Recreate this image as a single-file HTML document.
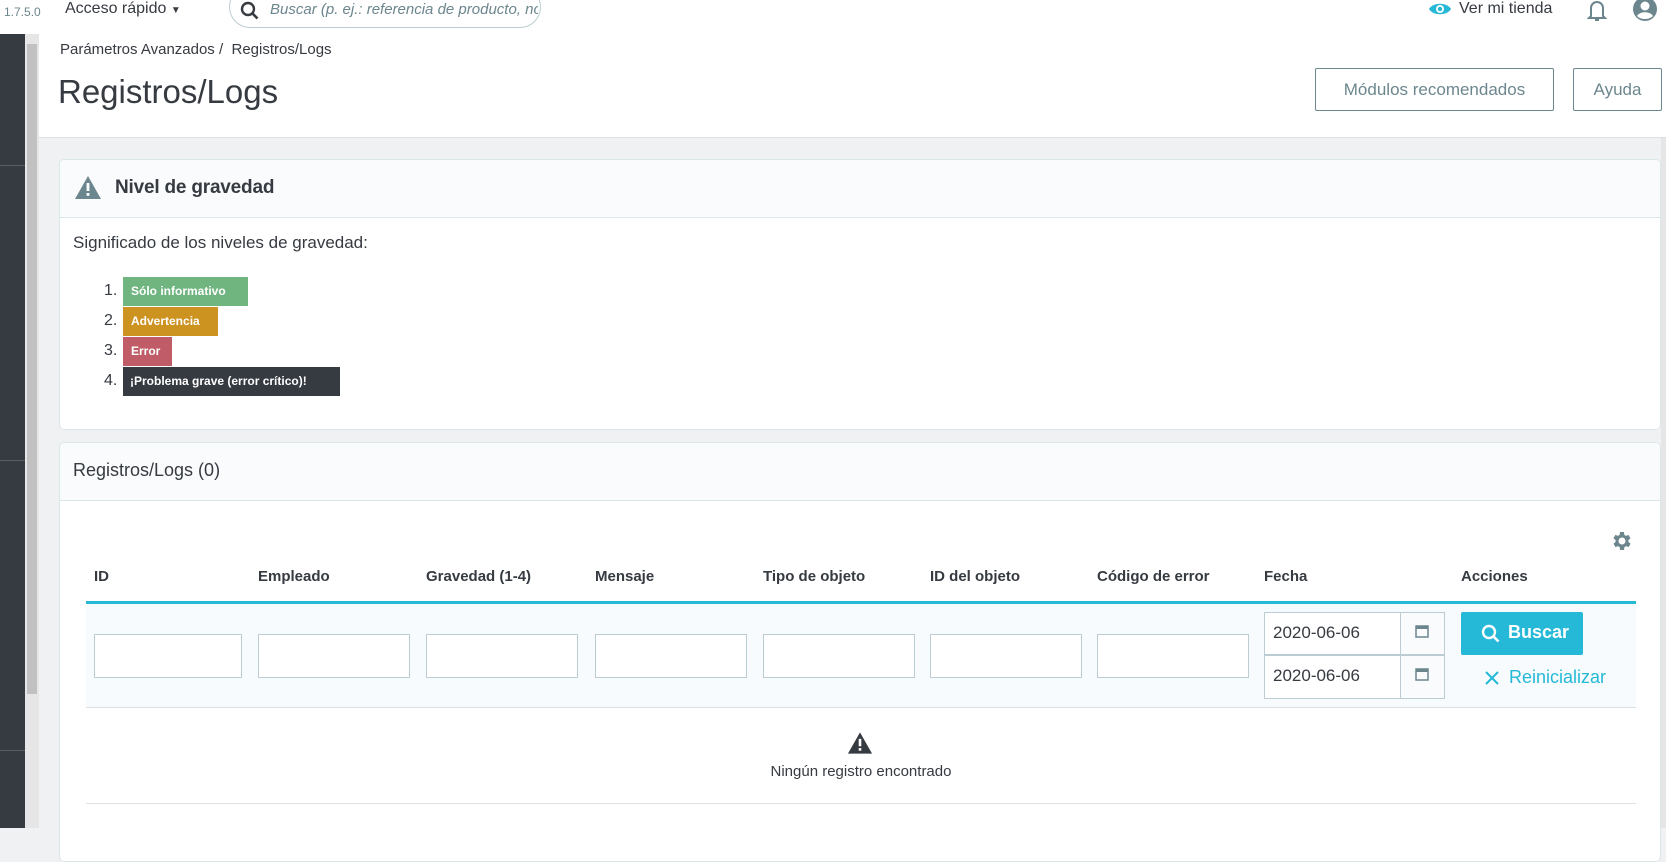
<!DOCTYPE html>
<html><head><meta charset="utf-8"><style>
*{box-sizing:border-box;margin:0;padding:0}
body{width:1666px;height:828px;overflow:hidden;background:#eff1f2;font-family:"Liberation Sans",sans-serif;color:#363a41;position:relative}
.a{position:absolute}
.top{left:0;top:0;width:1666px;height:34px;background:#fff}
.side{left:0;top:34px;width:25px;height:794px;background:#363a41}
.sb{left:25px;top:34px;width:14px;height:794px;background:#e6e6e6}
.sb i{position:absolute;left:2px;top:10px;width:10px;height:650px;background:#c1c1c1}
.head{left:39px;top:34px;width:1627px;height:104px;background:#fff;border-bottom:1px solid #dbe0e3}
.btn{border:1px solid #6c868e;color:#6c868e;background:#fff;font-size:17px;text-align:center;line-height:42px;border-radius:2px}
.card{background:#fff;border:1px solid #dbe6e9;border-radius:5px;left:59px;width:1602px}
.ch{background:#fafbfc;border-bottom:1px solid #dbe6e9;height:58px;border-radius:5px 5px 0 0}
.badge{position:absolute;left:123px;height:29px;color:#fff;font-weight:bold;font-size:12px;line-height:29px;padding-left:8px}
.num{position:absolute;left:104px;font-size:16px}
.th{position:absolute;top:568px;font-weight:bold;font-size:15px;color:#363a41}
.in{position:absolute;top:634px;height:44px;background:#fff;border:1px solid #bbcdd2}
</style></head><body>
<div class="a top"></div>
<div class="a" style="left:4px;top:5px;font-size:12px;color:#6c868e">1.7.5.0</div>
<div class="a" style="left:65px;top:0px;font-size:16px;color:#363a41">Acceso rápido <span style="font-size:10px">▼</span></div>
<div class="a" style="left:229px;top:-14px;width:312px;height:42px;border:1px solid #bbcdd2;border-radius:21px"></div>
<svg class="a" style="left:240px;top:1px" width="20" height="20" viewBox="0 0 20 20"><circle cx="8" cy="8" r="6" fill="none" stroke="#363a41" stroke-width="2.4"/><path d="M12.5 12.5l5 5" stroke="#363a41" stroke-width="2.6"/></svg>
<div class="a" style="left:270px;top:1px;font-size:15px;font-style:italic;color:#6c868e;white-space:nowrap;width:268px;overflow:hidden">Buscar (p. ej.: referencia de producto, nombre</div>
<svg class="a" style="left:1428px;top:0" width="24" height="18" viewBox="0 0 24 18"><path d="M1 9C5 2 19 2 23 9C19 16 5 16 1 9Z" fill="#25b9d7"/><circle cx="12" cy="9" r="4" fill="#fff"/><circle cx="12" cy="9" r="2.2" fill="#25b9d7"/></svg>
<div class="a" style="left:1459px;top:0;font-size:16px;color:#363a41">Ver mi tienda</div>
<svg class="a" style="left:1587px;top:0" width="20" height="22" viewBox="0 0 20 22"><path d="M4 16V8a6 6 0 0 1 12 0v8l2 2H2z" fill="none" stroke="#6c868e" stroke-width="2"/><path d="M8 20h4" stroke="#6c868e" stroke-width="2"/></svg>
<svg class="a" style="left:1632px;top:-4px" width="26" height="26" viewBox="0 0 26 26"><circle cx="13" cy="13" r="12" fill="#6c868e"/><circle cx="13" cy="10" r="4.5" fill="#fff"/><path d="M5 20c3-5 13-5 16 0c-4 4-12 4-16 0z" fill="#fff"/></svg>
<div class="a side"></div><div class="a side" style="top:165px;height:1px;background:#5a5e63"></div><div class="a side" style="top:460px;height:1px;background:#5a5e63"></div><div class="a side" style="top:750px;height:1px;background:#5a5e63"></div>
<div class="a sb"><i></i></div>
<div class="a head"></div>
<div class="a" style="left:60px;top:41px;font-size:15px;color:#363a41">Parámetros Avanzados /&nbsp; Registros/Logs</div>
<div class="a" style="left:58px;top:73px;font-size:33px;color:#363a41">Registros/Logs</div>
<div class="a btn" style="left:1315px;top:68px;width:239px;height:43px">Módulos recomendados</div>
<div class="a btn" style="left:1573px;top:68px;width:89px;height:43px">Ayuda</div>

<div class="a card" style="top:159px;height:271px"><div class="ch"></div></div>
<svg class="a" style="left:74px;top:175px" width="28" height="25" viewBox="0 0 28 25"><path d="M14 1L27 24H1Z" fill="#6c868e"/><rect x="12.6" y="8" width="2.8" height="8" fill="#fff"/><rect x="12.6" y="18" width="2.8" height="2.8" fill="#fff"/></svg>
<div class="a" style="left:115px;top:177px;font-size:19px;font-weight:bold;color:#363a41;letter-spacing:-.2px">Nivel de gravedad</div>
<div class="a" style="left:73px;top:233px;font-size:17px">Significado de los niveles de gravedad:</div>
<div class="num" style="top:282px">1.</div><div class="badge" style="top:277px;width:125px;background:#70b580">Sólo informativo</div>
<div class="num" style="top:312px">2.</div><div class="badge" style="top:307px;width:95px;background:#cd9321">Advertencia</div>
<div class="num" style="top:342px">3.</div><div class="badge" style="top:337px;width:49px;background:#c05c67">Error</div>
<div class="num" style="top:372px">4.</div><div class="badge" style="top:367px;width:217px;background:#363a41;padding-left:7px">¡Problema grave (error crítico)!</div>

<div class="a card" style="top:442px;height:420px"><div class="ch"></div></div>
<div class="a" style="left:73px;top:460px;font-size:18px">Registros/Logs (0)</div>
<svg class="a" style="left:1609px;top:529px" width="24" height="24" viewBox="0 0 24 24"><path fill="#6c868e" d="M19.4 13a7.5 7.5 0 0 0 0-2l2.1-1.6-2-3.5-2.5 1a7 7 0 0 0-1.7-1L15 3h-4l-.4 2.9a7 7 0 0 0-1.7 1l-2.5-1-2 3.5L6.6 11a7.5 7.5 0 0 0 0 2l-2.1 1.6 2 3.5 2.5-1a7 7 0 0 0 1.7 1L11 21h4l.4-2.9a7 7 0 0 0 1.7-1l2.5 1 2-3.5zM13 15.5a3.5 3.5 0 1 1 0-7 3.5 3.5 0 0 1 0 7z"/></svg>
<div class="th" style="left:94px">ID</div><div class="th" style="left:258px">Empleado</div><div class="th" style="left:426px">Gravedad (1-4)</div><div class="th" style="left:595px">Mensaje</div><div class="th" style="left:763px">Tipo de objeto</div><div class="th" style="left:930px">ID del objeto</div><div class="th" style="left:1097px">Código de error</div><div class="th" style="left:1264px">Fecha</div><div class="th" style="left:1461px">Acciones</div>
<div class="a" style="left:86px;top:601px;width:1550px;height:3px;background:#25b9d7"></div>
<div class="a" style="left:86px;top:604px;width:1550px;height:104px;background:#f7fbfd;border-bottom:1px solid #dbe0e3"></div>
<div class="in" style="left:94px;width:148px"></div><div class="in" style="left:258px;width:152px"></div><div class="in" style="left:426px;width:152px"></div><div class="in" style="left:595px;width:152px"></div><div class="in" style="left:763px;width:152px"></div><div class="in" style="left:930px;width:152px"></div><div class="in" style="left:1097px;width:152px"></div>
<div class="a" style="left:1264px;top:612px;width:181px;height:87px;background:#fff;border:1px solid #bbcdd2"></div>
<div class="a" style="left:1400px;top:612px;width:45px;height:87px;background:#fafbfc;border:1px solid #bbcdd2"></div>
<div class="a" style="left:1264px;top:654px;width:181px;height:2px;background:#bbcdd2"></div>
<div class="a" style="left:1273px;top:623px;font-size:17px">2020-06-06</div>
<div class="a" style="left:1273px;top:666px;font-size:17px">2020-06-06</div>
<svg class="a" style="left:1415px;top:624px" width="14" height="14" viewBox="0 0 14 14"><rect x="1" y="2" width="12" height="11" fill="none" stroke="#6c868e" stroke-width="1.5"/><rect x="1" y="2" width="12" height="3" fill="#6c868e"/></svg>
<svg class="a" style="left:1415px;top:667px" width="14" height="14" viewBox="0 0 14 14"><rect x="1" y="2" width="12" height="11" fill="none" stroke="#6c868e" stroke-width="1.5"/><rect x="1" y="2" width="12" height="3" fill="#6c868e"/></svg>
<div class="a" style="left:1461px;top:612px;width:122px;height:43px;background:#25b9d7;border-radius:2px"></div>
<svg class="a" style="left:1481px;top:624px" width="20" height="20" viewBox="0 0 20 20"><circle cx="8" cy="8" r="6" fill="none" stroke="#fff" stroke-width="2.4"/><path d="M12.5 12.5l5 5" stroke="#fff" stroke-width="2.6"/></svg>
<div class="a" style="left:1508px;top:622px;font-size:18px;font-weight:bold;color:#fff">Buscar</div>
<svg class="a" style="left:1484px;top:670px" width="16" height="16" viewBox="0 0 16 16"><path d="M2 2l12 12M14 2L2 14" stroke="#25b9d7" stroke-width="2"/></svg>
<div class="a" style="left:1509px;top:667px;font-size:18px;color:#25b9d7">Reinicializar</div>
<svg class="a" style="left:847px;top:731px" width="26" height="24" viewBox="0 0 28 25"><path d="M14 1L27 24H1Z" fill="#363a41"/><rect x="12.6" y="8" width="2.8" height="8" fill="#fff"/><rect x="12.6" y="18" width="2.8" height="2.8" fill="#fff"/></svg>
<div class="a" style="left:0;width:1722px;text-align:center;top:763px;font-size:15px;color:#363a41">Ningún registro encontrado</div>
<div class="a" style="left:86px;top:803px;width:1550px;height:1px;background:#dbe0e3"></div>
<div class="a" style="left:1661px;top:138px;width:5px;height:690px;background:#e6e6e6"></div>
</body></html>
